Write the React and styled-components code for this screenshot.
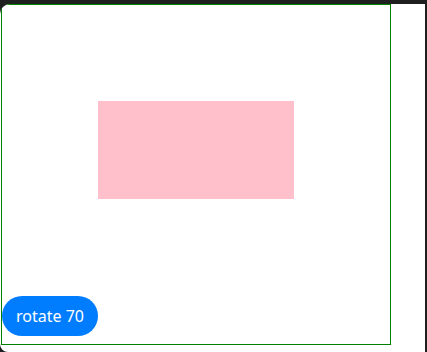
import React from 'react';
import styled, { createGlobalStyle } from 'styled-components';

const GlobalStyle = createGlobalStyle`
  html, body {
    margin: 0;
    padding: 0;
    background: #1f1f1f;
    width: 427px;
    height: 352px;
    overflow: hidden;
  }

  #root {
    width: 427px;
    height: 352px;
  }
`;

const Window = styled.div`
  box-sizing: border-box;
  margin: 4px 2px 0 0;
  height: 348px;
  background: #ffffff;
  border-radius: 10px 0 0 8px;
  overflow: hidden;
  padding-left: 1px;
`;

const Stage = styled.div`
  box-sizing: border-box;
  width: 390px;
  height: 341px;
  border: 1px solid #008000;
  display: flex;
  flex-direction: column;
  align-items: center;
`;

const Box = styled.div`
  width: 196px;
  height: 98px;
  margin-top: 96px;
  background: #ffc0cb;
  transform: rotate(${(p) => p.$angle}deg);
`;

const RotateButton = styled.button`
  align-self: flex-start;
  margin-top: auto;
  margin-bottom: 8px;
  width: 96px;
  height: 40px;
  border: none;
  border-radius: 20px;
  background: #007dff;
  color: #ffffff;
  font-family: "Noto Sans", "Open Sans", sans-serif;
  font-size: 16px;
  padding: 0;
  cursor: pointer;
`;

const App = () => {
  const [angle, setAngle] = React.useState(0);

  return (
    <>
      <GlobalStyle />
      <Window>
        <Stage>
          <Box $angle={angle} />
          <RotateButton onClick={() => setAngle(angle === 70 ? 0 : 70)}>
            rotate 70
          </RotateButton>
        </Stage>
      </Window>
    </>
  );
};

export default App;
